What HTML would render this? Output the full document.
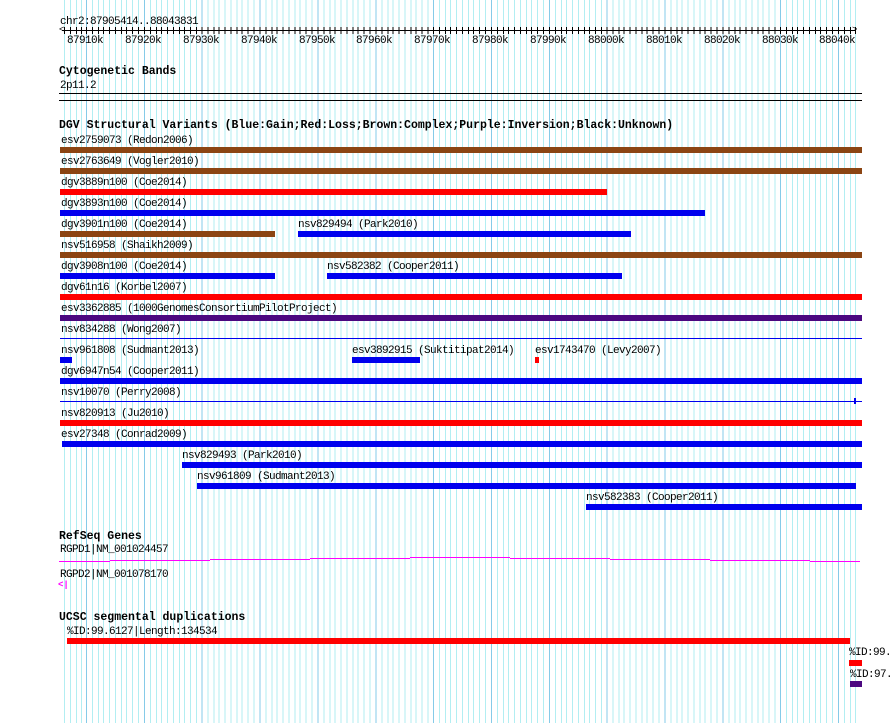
<!DOCTYPE html>
<html><head><meta charset="utf-8"><style>
body{margin:0;width:890px;height:723px;background:#fff;position:relative;overflow:hidden;font-family:"Liberation Mono",monospace;}
.g{position:absolute;left:60px;top:0;width:797px;height:723px;
background:repeating-linear-gradient(to right,#86cbe8 0 1px,transparent 1px 6px,#b2eef2 6px 7px,transparent 7px 12px,#b2eef2 12px 13px,transparent 13px 17px,#b2eef2 17px 18px,transparent 18px 23px,#b2eef2 23px 24px,transparent 24px 29px,#b2eef2 29px 30px,transparent 30px 35px,#b2eef2 35px 36px,transparent 36px 40px,#b2eef2 40px 41px,transparent 41px 46px,#b2eef2 46px 47px,transparent 47px 52px,#b2eef2 52px 53px,transparent 53px 57.85px);
background-position:26px 0;}
.t{position:absolute;font-size:11px;letter-spacing:-0.6px;line-height:11px;white-space:pre;color:#000;}
.h{position:absolute;font-size:11.5px;line-height:12px;font-weight:bold;white-space:pre;}
.b{position:absolute;height:6px;}
.bl{background:#0000ee}.r{background:#ff0000}.br{background:#8b4513}.p{background:#4b0880}
.k{position:absolute;background:#000;}
.m{position:absolute;height:1px;background:#ff00ff;}
</style></head><body>
<div class="g"></div>
<div class="t" style="left:60px;top:17px">chr2:87905414..88043831</div>
<div class="k" style="left:62px;top:30px;width:794px;height:1px"></div>
<div style="position:absolute;left:60px;top:27px;width:797px;height:7px;background:repeating-linear-gradient(to right,#000 0 1px,transparent 1px 6px,#000 6px 7px,transparent 7px 12px,#000 12px 13px,transparent 13px 17px,#000 17px 18px,transparent 18px 23px,#000 23px 24px,transparent 24px 29px,#000 29px 30px,transparent 30px 35px,#000 35px 36px,transparent 36px 40px,#000 40px 41px,transparent 41px 46px,#000 46px 47px,transparent 47px 52px,#000 52px 53px,transparent 53px 57.85px);background-position:26px 0"></div>
<div style="position:absolute;left:59px;top:27px;font-size:9px;line-height:7px">&lt;</div>
<div style="position:absolute;left:852px;top:27px;font-size:9px;line-height:7px">&gt;</div>
<div class="t" style="left:67px;top:36px">87910k</div>
<div class="t" style="left:125px;top:36px">87920k</div>
<div class="t" style="left:183px;top:36px">87930k</div>
<div class="t" style="left:241px;top:36px">87940k</div>
<div class="t" style="left:299px;top:36px">87950k</div>
<div class="t" style="left:356px;top:36px">87960k</div>
<div class="t" style="left:414px;top:36px">87970k</div>
<div class="t" style="left:472px;top:36px">87980k</div>
<div class="t" style="left:530px;top:36px">87990k</div>
<div class="t" style="left:588px;top:36px">88000k</div>
<div class="t" style="left:646px;top:36px">88010k</div>
<div class="t" style="left:704px;top:36px">88020k</div>
<div class="t" style="left:762px;top:36px">88030k</div>
<div class="t" style="left:819px;top:36px">88040k</div>

<div class="h" style="left:59px;top:66px">Cytogenetic Bands</div>
<div class="t" style="left:60px;top:81px">2p11.2</div>
<div class="k" style="left:59px;top:93px;width:803px;height:1px"></div>
<div class="k" style="left:59px;top:100px;width:803px;height:1px"></div>

<div class="h" style="left:59px;top:120px">DGV Structural Variants (Blue:Gain;Red:Loss;Brown:Complex;Purple:Inversion;Black:Unknown)</div>
<div class="t" style="left:61px;top:136px">esv2759073 (Redon2006)</div>
<div class="b br" style="left:60px;top:147px;width:802px"></div>
<div class="t" style="left:61px;top:157px">esv2763649 (Vogler2010)</div>
<div class="b br" style="left:60px;top:168px;width:802px"></div>
<div class="t" style="left:61px;top:178px">dgv3889n100 (Coe2014)</div>
<div class="b r" style="left:60px;top:189px;width:547px"></div>
<div class="t" style="left:61px;top:199px">dgv3893n100 (Coe2014)</div>
<div class="b bl" style="left:60px;top:210px;width:645px"></div>
<div class="t" style="left:61px;top:220px">dgv3901n100 (Coe2014)</div>
<div class="b br" style="left:60px;top:231px;width:215px"></div>
<div class="t" style="left:298px;top:220px">nsv829494 (Park2010)</div>
<div class="b bl" style="left:298px;top:231px;width:333px"></div>
<div class="t" style="left:61px;top:241px">nsv516958 (Shaikh2009)</div>
<div class="b br" style="left:60px;top:252px;width:802px"></div>
<div class="t" style="left:61px;top:262px">dgv3908n100 (Coe2014)</div>
<div class="b bl" style="left:60px;top:273px;width:215px"></div>
<div class="t" style="left:327px;top:262px">nsv582382 (Cooper2011)</div>
<div class="b bl" style="left:327px;top:273px;width:295px"></div>
<div class="t" style="left:61px;top:283px">dgv61n16 (Korbel2007)</div>
<div class="b r" style="left:60px;top:294px;width:802px"></div>
<div class="t" style="left:61px;top:304px">esv3362885 (1000GenomesConsortiumPilotProject)</div>
<div class="b p" style="left:60px;top:315px;width:802px"></div>
<div class="t" style="left:61px;top:325px">nsv834288 (Wong2007)</div>
<div class="k" style="left:60px;top:338px;width:802px;height:1px;background:#0000ee"></div>
<div class="t" style="left:61px;top:346px">nsv961808 (Sudmant2013)</div>
<div class="b bl" style="left:60px;top:357px;width:12px"></div>
<div class="t" style="left:352px;top:346px">esv3892915 (Suktitipat2014)</div>
<div class="b bl" style="left:352px;top:357px;width:68px"></div>
<div class="t" style="left:535px;top:346px">esv1743470 (Levy2007)</div>
<div class="b r" style="left:535px;top:357px;width:4px"></div>
<div class="t" style="left:61px;top:367px">dgv6947n54 (Cooper2011)</div>
<div class="b bl" style="left:60px;top:378px;width:802px"></div>
<div class="t" style="left:61px;top:388px">nsv10070 (Perry2008)</div>
<div class="k" style="left:60px;top:401px;width:802px;height:1px;background:#0000ee"></div>
<div class="b bl" style="left:854px;top:398px;width:2px"></div>
<div class="t" style="left:61px;top:409px">nsv820913 (Ju2010)</div>
<div class="b r" style="left:60px;top:420px;width:802px"></div>
<div class="t" style="left:61px;top:430px">esv27348 (Conrad2009)</div>
<div class="b bl" style="left:62px;top:441px;width:800px"></div>
<div class="t" style="left:182px;top:451px">nsv829493 (Park2010)</div>
<div class="b bl" style="left:182px;top:462px;width:680px"></div>
<div class="t" style="left:197px;top:472px">nsv961809 (Sudmant2013)</div>
<div class="b bl" style="left:197px;top:483px;width:659px"></div>
<div class="t" style="left:586px;top:493px">nsv582383 (Cooper2011)</div>
<div class="b bl" style="left:586px;top:504px;width:276px"></div>

<div class="h" style="left:59px;top:531px">RefSeq Genes</div>
<div class="t" style="left:60px;top:545px">RGPD1|NM_001024457</div>
<div class="m" style="left:59px;top:561px;width:51px"></div>
<div class="m" style="left:110px;top:560px;width:100px"></div>
<div class="m" style="left:210px;top:559px;width:100px"></div>
<div class="m" style="left:310px;top:558px;width:100px"></div>
<div class="m" style="left:410px;top:557px;width:100px"></div>
<div class="m" style="left:510px;top:558px;width:100px"></div>
<div class="m" style="left:610px;top:559px;width:100px"></div>
<div class="m" style="left:710px;top:560px;width:100px"></div>
<div class="m" style="left:810px;top:561px;width:50px"></div>
<div class="t" style="left:60px;top:570px">RGPD2|NM_001078170</div>
<div style="position:absolute;left:58px;top:580px;color:#ff00ff;font-size:9px;line-height:10px;font-weight:bold">&lt;|</div>

<div class="h" style="left:59px;top:612px">UCSC segmental duplications</div>
<div class="t" style="left:67px;top:627px">%ID:99.6127|Length:134534</div>
<div class="b r" style="left:67px;top:638px;width:783px"></div>
<div class="t" style="left:849px;top:648px">%ID:99.</div>
<div class="b r" style="left:849px;top:660px;width:13px"></div>
<div class="t" style="left:850px;top:670px">%ID:97.</div>
<div class="b p" style="left:850px;top:681px;width:12px"></div>
</body></html>
